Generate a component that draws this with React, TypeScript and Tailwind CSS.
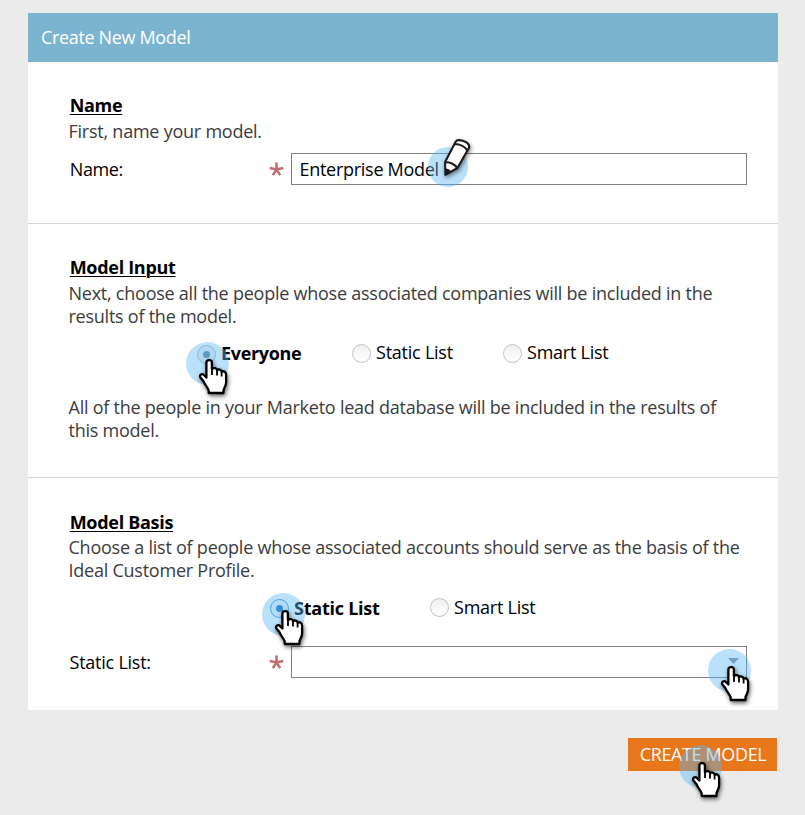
import type { ReactNode } from "react";

function TapPointer({ className }: { className: string }) {
  return (
    <svg
      className={`absolute z-10 overflow-visible pointer-events-none drop-shadow-[1px_2px_2px_rgba(0,0,0,0.6)] ${className}`}
      width="43"
      height="54"
      viewBox="0 0 43 54"
    >
      <path
        d="M20.4 35.5V20.6C20.4 17.3 25.9 17.3 25.9 20.6V27.2C27.4 25.4 30.9 26 31 28.2C32.6 26.8 35.4 27.6 35.6 29.7C37.6 28.5 40.2 30.2 40.1 32.8V40.5C40.1 43.3 38 46.2 37.5 48.2V51H22.7V48.4C21.5 44.9 18.7 42.7 17.5 39.2L14.4 35.4C12.9 32.9 16.2 31 18.1 33.2Z"
        fill="#fff"
        stroke="#000"
        strokeWidth="2.3"
        strokeLinejoin="round"
      />
      <path d="M26 26.5V33M31 28V33.6M35.6 29.5V34.4" fill="none" stroke="#000" strokeWidth="1.8" />
    </svg>
  );
}

function Halo({ className }: { className: string }) {
  return <span className={`absolute rounded-full bg-[#5bb8f6]/42 pointer-events-none ${className}`} />;
}

function Pencil() {
  return (
    <svg
      className="absolute left-[147px] -top-[18px] overflow-visible drop-shadow-[1.5px_2px_2px_rgba(0,0,0,0.5)]"
      width="32"
      height="40"
      viewBox="0 0 32 40"
    >
      <path
        d="M6.4 38.8L6.1 26L16.5 5.9C18.4 2.2 31 5.2 30.1 11.4L18.5 32Z"
        fill="#fff"
        stroke="#1a1a1a"
        strokeWidth="2.1"
        strokeLinejoin="round"
      />
      <path d="M15.2 8.2C20.3 7.9 25.8 10.2 28.4 14.6M6.1 26.3C10.5 25.7 15.8 28.1 18.1 32" fill="none" stroke="#1a1a1a" strokeWidth="2.1" />
      <path d="M6.1 32.2Q10.4 32.6 12.6 35.4L6.4 39.2Z" fill="#1a1a1a" />
    </svg>
  );
}

function Heading({ children }: { children: ReactNode }) {
  return (
    <h2 className="ml-[1.7px] h-[23px] w-fit text-[18px] leading-[23px] font-bold tracking-[-0.3px] text-black underline decoration-1 underline-offset-[2px]">
      {children}
    </h2>
  );
}

function Required() {
  return (
    <svg className="mt-px mr-[7px] shrink-0" width="15" height="15" viewBox="0 0 15 15">
      <path d="M7.5 7.4V.6M7.5 7.4L.7 6M7.5 7.4L14.3 6M7.5 7.4L3.8 13.2M7.5 7.4L11.2 13.2" stroke="#c66a6b" strokeWidth="2.5" />
    </svg>
  );
}

function Radio({ tone }: { tone?: "muted" | "blue" }) {
  const ring =
    tone === "blue"
      ? "mt-px border-[#3c9ade] border-[1.5px] bg-[#f2f8fc]"
      : tone === "muted"
        ? "mt-px border-[#b3b5b8] border-[1.5px] bg-[#f2f2f2]"
        : "border-[#c2c2c2] border-[1.5px] bg-linear-to-b from-[#f0f0f0] to-white";
  return (
    <span className={`flex size-[19px] shrink-0 items-center justify-center rounded-full ${ring}`}>
      {tone && <span className={`size-[7px] rounded-full ${tone === "blue" ? "bg-[#1775b9]" : "bg-[#63819a]"}`} />}
    </span>
  );
}

export default function App() {
  return (
    <main className="flex h-[815px] w-[805px] flex-col overflow-hidden bg-[#ebebeb] pt-[13px] pl-7 font-['Open_Sans',sans-serif] text-[18px] leading-[23px] tracking-[-0.237px] text-black">
      <div className="w-[750px] bg-white">
        <header className="flex h-[49px] items-center bg-[#7ab4ce] pl-[13px] tracking-[-0.35px] text-white">Create New Model</header>

        <section className="h-[162px] border-b border-[#d5d5d5] pt-8 pl-10">
          <Heading>Name</Heading>
          <p className="mt-[3px] pl-[0.5px] text-[#3c3c3c]">First, name your model.</p>
          <div className="mt-[10px] flex h-8 items-center">
            <label className="ml-[1.7px] w-[199.3px] tracking-[-0.35px]">Name:</label>
            <Required />
            <div className="relative flex h-8 w-[456px] items-center border border-[#808080] bg-white pl-[7.5px] tracking-[-0.28px]">
              Enterprise Model
              <Halo className="left-[136px] -top-[7px] size-10" />
              <Pencil />
            </div>
          </div>
        </section>

        <section className="h-[254px] border-b border-[#d5d5d5] pt-8 pl-10">
          <Heading>Model Input</Heading>
          <p className="mt-[3px] pl-[0.5px] tracking-[-0.243px] text-[#3c3c3c]">
            Next, choose all the people whose associated companies will be included in the
            <br />
            results of the model.
          </p>
          <div className="mt-[14px] flex h-[23px] items-center">
            <div className="relative ml-[129px] flex w-[155px] items-center gap-[5px] font-bold tracking-[-0.33px]">
              <Radio tone="muted" />
              Everyone
              <Halo className="-left-[11px] top-0 size-[43px]" />
              <TapPointer className="-left-[11px] top-0" />
            </div>
            <div className="flex w-[151px] items-center gap-[5px]">
              <Radio />
              <span className="pb-[2px]">Static List</span>
            </div>
            <div className="flex items-center gap-[5px]">
              <Radio />
              <span className="pb-[2px]">Smart List</span>
            </div>
          </div>
          <p className="mt-[31px] pl-[0.5px] text-[#3c3c3c]">
            All of the people in your Marketo lead database will be included in the results of
            <br />
            this model.
          </p>
        </section>

        <section className="h-[232px] pt-[33px] pl-10">
          <Heading>Model Basis</Heading>
          <p className="mt-[2px] pl-[0.5px] text-[#3c3c3c]">
            Choose a list of people whose associated accounts should serve as the basis of the
            <br />
            Ideal Customer Profile.
          </p>
          <div className="mt-[14px] flex h-[23px] items-center">
            <div className="relative ml-[202px] flex w-[160px] items-center gap-[5px] font-bold">
              <Radio tone="blue" />
              <span className="pt-[2px]">Static List</span>
              <Halo className="-left-[8px] -top-[2px] size-[43px]" />
              <TapPointer className="-left-[8px] -top-[2px]" />
            </div>
            <div className="flex items-center gap-[5px]">
              <Radio />
              Smart List
            </div>
          </div>
          <div className="mt-[27px] flex h-8 items-center">
            <label className="ml-[1.5px] w-[199.5px]">Static List:</label>
            <Required />
            <div className="relative flex h-8 w-[456px] items-center justify-end border border-[#808080] bg-white pr-[7px]">
              <svg className="mb-[3px]" width="11" height="6" viewBox="0 0 11 6">
                <path d="M0 0H11L5.5 6Z" fill="#7d8f9b" />
              </svg>
              <Halo className="left-[416px] top-[2px] size-[43px]" />
              <TapPointer className="left-[416px] top-[2px]" />
            </div>
          </div>
        </section>
      </div>

      <button className="relative mt-7 ml-[600px] h-[33px] w-[149px] bg-[#e8761a] pl-px tracking-[-0.37px] text-white">
        CREATE MODEL
        <Halo className="left-[51px] top-[7px] size-[43px]" />
        <TapPointer className="left-[51px] top-[7px]" />
      </button>
    </main>
  );
}
